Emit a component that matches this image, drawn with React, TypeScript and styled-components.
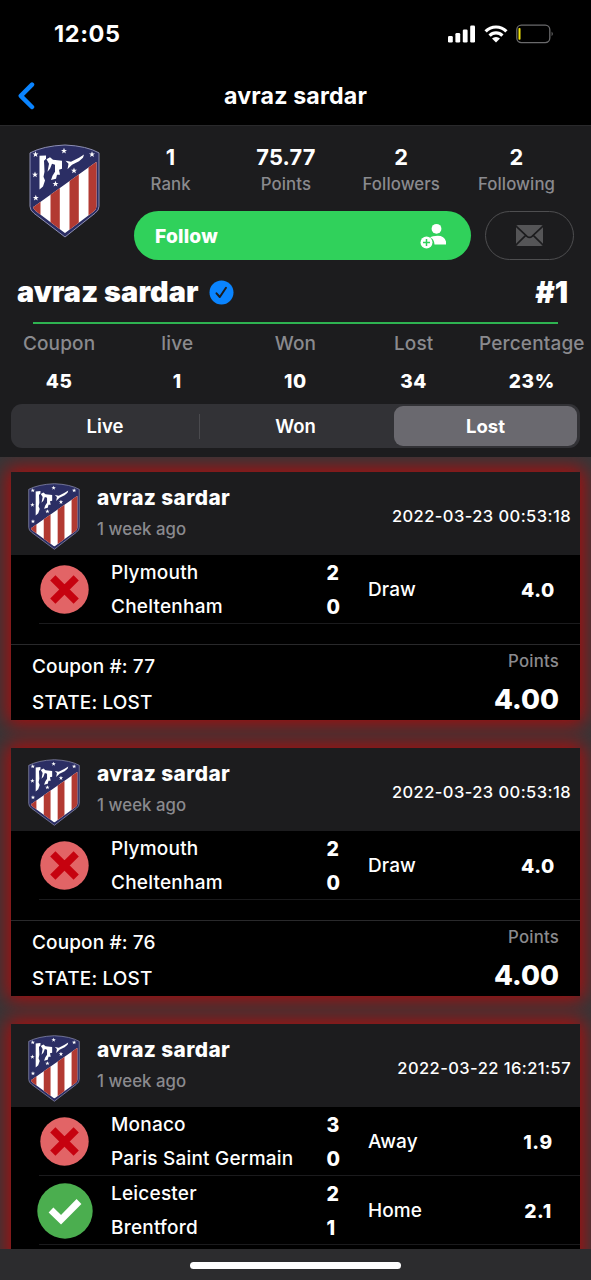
import React from "react";
import styled, { createGlobalStyle } from "styled-components";

const Global = createGlobalStyle`
  * { box-sizing: border-box; }
  body { margin: 0; background: #000; }
`;

const Screen = styled.div`
  width: 591px;
  height: 1280px;
  overflow: hidden;
  display: flex;
  flex-direction: column;
  background: #000;
  color: #fff;
  font-family: Inter, "Liberation Sans", sans-serif;
  white-space: nowrap;
`;

type TextProps = { $size: number; $weight?: number; $track?: number; $muted?: boolean; $line?: number };
const Text = styled.span<TextProps>`
  font-size: ${(p) => p.$size}px;
  font-weight: ${(p) => p.$weight ?? 500};
  letter-spacing: ${(p) => p.$track ?? 0}px;
  line-height: ${(p) => p.$line ?? 24}px;
  color: ${(p) => (p.$muted ? "#8a8a8e" : "#fff")};
`;

const StatusBar = styled.div`
  height: 67px;
  flex: none;
  display: flex;
  justify-content: space-between;
  align-items: center;
  padding: 1px 37px 0 54px;
`;
const StatusIcons = styled.div`
  display: flex;
  align-items: center;
  gap: 8px;
`;
const NavBar = styled.div`
  height: 59px;
  flex: none;
  display: grid;
  grid-template-columns: 60px 1fr 60px;
  align-items: center;
  justify-items: center;
  border-bottom: 1px solid #29292b;
`;
const Back = styled.svg`
  justify-self: start;
  margin-left: 17px;
`;

const Profile = styled.section`
  height: 331px;
  flex: none;
  background: #1c1c1e;
  display: flex;
  flex-direction: column;
`;
const ProfileTop = styled.div`
  display: flex;
  height: 136px;
  padding: 18px 17px 0 29px;
`;
const ProfileMain = styled.div`
  margin-left: 13px;
  flex: 1;
`;
const Stats = styled.div`
  display: grid;
  grid-template-columns: repeat(4, 115.3px);
  height: 67px;
`;
const Stat = styled.div`
  display: flex;
  flex-direction: column;
  align-items: center;
`;
const Actions = styled.div`
  display: flex;
  gap: 14px;
  padding-left: 21px;
`;
const FollowButton = styled.div`
  width: 337px;
  height: 49px;
  border-radius: 25px;
  background: #30d15b;
  display: flex;
  align-items: center;
  justify-content: space-between;
  padding: 0 24px 0 21px;
`;
const MessageButton = styled.div`
  width: 89px;
  height: 49px;
  border-radius: 25px;
  border: 1.5px solid #4e4e50;
  display: flex;
  align-items: center;
  justify-content: center;
`;
const NameRow = styled.div`
  display: flex;
  align-items: center;
  height: 60px;
  padding: 0 23px 0 17px;
`;
const Badge = styled.svg`
  margin: 0 auto 0 10px;
`;
const GreenLine = styled.div`
  height: 2px;
  margin: 0 33px;
  background: #2eb351;
`;
const Counters = styled.div`
  display: grid;
  grid-template-columns: repeat(5, 118.2px);
  height: 80px;
  padding-top: 8px;
`;
const Counter = styled(Stat)`
  gap: 14px;
`;
const Tabs = styled.div`
  display: grid;
  grid-template-columns: 187px 191px 1fr;
  height: 44px;
  margin: 0 11px;
  padding: 2px;
  border-radius: 11px;
  background: #323236;
`;
const Tab = styled.div<{ $active?: boolean; $divider?: boolean }>`
  display: flex;
  align-items: center;
  justify-content: center;
  padding-right: ${(p) => (p.$divider ? 3 : 0)}px;
  margin: ${(p) => (p.$active ? "0 1px 0 3px" : "0")};
  background: ${(p) =>
    p.$active ? "#6a696f" : p.$divider ? "linear-gradient(#4a4a4e, #4a4a4e) 100% 50% / 1px 25px no-repeat" : "transparent"};
  border-radius: ${(p) => (p.$divider ? 0 : 9)}px;
`;

const List = styled.main`
  height: 792px;
  flex: none;
  overflow: hidden;
  background: #363638;
  padding: 15px 11px 0;
  display: flex;
  flex-direction: column;
  gap: 28px;
`;
const Card = styled.article`
  flex: none;
  background: #000;
  box-shadow: 0 0 18px 4px rgba(205, 0, 0, 0.78);
`;
const CardHead = styled.header`
  height: 82.6px;
  background: #1c1c1e;
  display: flex;
  align-items: center;
  padding: 6px 9px 0 17px;
`;
const Author = styled.div`
  display: flex;
  flex-direction: column;
  gap: 7px;
  margin: 0 auto 5px 17px;
`;
const Match = styled.div`
  height: 69px;
  display: grid;
  grid-template-columns: 72px 215.5px 41.5px 127px 1fr;
  align-items: center;
  margin-left: 28px;
  padding-top: 2px;
  border-bottom: 1px solid #1b1b1d;
`;
const Mark = styled.div`
  width: 51px;
  display: flex;
  justify-content: center;
`;
const Pair = styled.div`
  display: flex;
  flex-direction: column;
  gap: 10.5px;
  padding-top: 1px;
`;
const Odds = styled.div`
  width: 86px;
  text-align: center;
`;
const CardFoot = styled.footer`
  margin-top: 20px;
  height: 76.4px;
  border-top: 1px solid #29292b;
  display: flex;
  justify-content: space-between;
  padding: 0 21px;
`;
const FootInfo = styled.div`
  display: flex;
  flex-direction: column;
  gap: 12px;
  padding-top: 10.8px;
`;
const FootPoints = styled.div`
  display: flex;
  flex-direction: column;
  align-items: flex-end;
  gap: 10px;
  padding-top: 4px;
`;
const HomeBar = styled.div`
  height: 31px;
  flex: none;
  background: #2c2c2e;
  display: flex;
  justify-content: center;
  padding-top: 13px;
`;
const HomeIndicator = styled.div`
  width: 211px;
  height: 7px;
  border-radius: 4px;
  background: #fff;
`;

const starPoints = "0,-3.2 .8,-1 3,-1 1.2,.4 1.9,2.6 0,1.3 -1.9,2.6 -1.2,.4 -3,-1 -.8,-1";
const stars = [[6.5, 10.5], [35, 7], [63, 10.5], [6, 31], [45, 27], [26.5, 40.3], [6.8, 54.5]];

function Crest({ width, height }: { width: number; height: number }) {
  const shape = "M36 1 Q58 2 70 9 L70 63 Q70 67 66 70 L36 94 L5 70 Q1 67 1 63 L1 9 Q14 2 36 1Z";
  return (
    <svg width={width} height={height} viewBox="0 0 71 95" preserveAspectRatio="none" style={{ flex: "none" }}>
      <defs>
        <clipPath id="crest-inner"><path d="M4 64 L67.5 18 V63 Q67.5 66 65 68 L36 90 L7 68 Q4 66 4 63Z" /></clipPath>
      </defs>
      <path d={shape} fill="#2b2e64" stroke="#8e90b4" strokeWidth="1" />
      <g clipPath="url(#crest-inner)">
        <path fill="#fff" d="M0 0h71v95H0z" />
        <path fill="#b23a32" d="M3 0h8.5v95H3zM21.5 0h9.3v95h-9.3zM40.5 0h9.3v95h-9.3zM59.5 0h9v95h-9z" />
      </g>
      <path
        fill="#fff"
        d="M10.5 12 L17 11.5 L17 15 L15 17 L15.5 28 L14.5 33 L16 37 L14 43 L10.5 46Z M17.5 15.5 L21 13.5 L24 16 L33 17 L33 25 L30 26 L31 31 L28 31 L27 35 L22 36.5 L23.5 32 L26 28 L26 21 L23 20 L21 25 L18.5 28 L20 20Z M36.5 17 L42 18 L50 14 L55 10.5 L54 14 L50 17.5 L43 21 L38.5 25.5 L39.5 20Z"
      />
      {stars.map(([x, y]) => <polygon key={`${x}-${y}`} points={starPoints} transform={`translate(${x} ${y})`} fill="#fff" />)}
    </svg>
  );
}

function LostMark() {
  return (
    <svg width="49" height="49" viewBox="0 0 49 49">
      <circle cx="24.5" cy="24.5" r="24.2" fill="#e26466" />
      <path d="M12.8 12.8 36.2 36.2M36.2 12.8 12.8 36.2" stroke="#c6020f" strokeWidth="7.4" />
    </svg>
  );
}
function WonMark() {
  return (
    <svg width="56" height="56" viewBox="0 0 56 56" style={{ flex: "none" }}>
      <circle cx="28" cy="28" r="27.7" fill="#4bae4f" />
      <path d="M14 27 24 36.8 42 18.5" fill="none" stroke="#fff" strokeWidth="6.8" />
    </svg>
  );
}

type Game = { home: string; away: string; hs: number; as: number; pick: string; odds: string; won?: boolean };
type Coupon = { id: number; date: string; games: Game[] };
const plymouth: Game = { home: "Plymouth", away: "Cheltenham", hs: 2, as: 0, pick: "Draw", odds: "4.0" };
const coupons: Coupon[] = [
  { id: 77, date: "2022-03-23 00:53:18", games: [plymouth] },
  { id: 76, date: "2022-03-23 00:53:18", games: [plymouth] },
  {
    id: 75, date: "2022-03-22 16:21:57", games: [
      { home: "Monaco", away: "Paris Saint Germain", hs: 3, as: 0, pick: "Away", odds: "1.9" },
      { home: "Leicester", away: "Brentford", hs: 2, as: 1, pick: "Home", odds: "2.1", won: true },
    ],
  },
];

function CouponCard({ coupon, footer }: { coupon: Coupon; footer: boolean }) {
  return (
    <Card>
      <CardHead>
        <Crest width={52} height={67} />
        <Author>
          <Text $size={20.8} $weight={850} $track={0.4}>avraz sardar</Text>
          <Text $size={16.8} $muted $track={0.05}>1 week ago</Text>
        </Author>
        <Text $size={16.5} $track={0.43}>{coupon.date}</Text>
      </CardHead>
      {coupon.games.map((g) => (
        <Match key={g.home}>
          <Mark>{g.won ? <WonMark /> : <LostMark />}</Mark>
          <Pair>
            <Text $size={19} $track={0.22}>{g.home}</Text>
            <Text $size={19} $track={0.22}>{g.away}</Text>
          </Pair>
          <Pair>
            <Text $size={19.5} $weight={800}>{g.hs}</Text>
            <Text $size={19.5} $weight={800}>{g.as}</Text>
          </Pair>
          <Text $size={19} $track={0.1} $line={25}>{g.pick}</Text>
          <Odds><Text $size={19.2} $weight={800} $track={0.6}>{g.odds}</Text></Odds>
        </Match>
      ))}
      {footer ? (
        <CardFoot>
          <FootInfo>
            <Text $size={19} $track={0.13}>Coupon #: {coupon.id}</Text>
            <Text $size={19} $track={0.13}>STATE: LOST</Text>
          </FootInfo>
          <FootPoints>
            <Text $size={16.8} $muted $track={0.2}>Points</Text>
            <Text $size={27.5} $weight={850} $line={32}>4.00</Text>
          </FootPoints>
        </CardFoot>
      ) : <CardFoot />}
    </Card>
  );
}

const profileStats = [["1", "Rank"], ["75.77", "Points"], ["2", "Followers"], ["2", "Following"]];
const counters = [["Coupon", "45"], ["live", "1"], ["Won", "10"], ["Lost", "34"], ["Percentage", "23%"]];

export default function App() {
  return (
    <Screen>
      <Global />
      <StatusBar>
        <Text $size={23.5} $weight={700} $track={0.6}>12:05</Text>
        <StatusIcons>
          <svg width="28" height="18" viewBox="0 0 28 18" fill="#fff">
            <rect x="0" y="11" width="4.8" height="6.5" rx="1.3" />
            <rect x="7.4" y="8" width="4.8" height="9.5" rx="1.3" />
            <rect x="14.8" y="4.5" width="4.8" height="13" rx="1.3" />
            <rect x="22.2" y="0.5" width="4.8" height="17" rx="1.3" />
          </svg>
          <svg width="24" height="18" viewBox="0 0 24 18" fill="none" stroke="#fff" strokeWidth="3.2">
            <path d="M1.6 6.4A14.5 14.5 0 0 1 22.4 6.4M5.6 10.6A9 9 0 0 1 18.4 10.6" />
            <path d="M12 17.4 8 13.6A5.6 5.6 0 0 1 16 13.6Z" fill="#fff" stroke="none" />
          </svg>
          <svg width="38" height="20" viewBox="0 0 38 20">
            <rect x="0.8" y="1.2" width="33" height="17.4" rx="4.5" fill="none" stroke="#6a6a6c" strokeWidth="1.3" />
            <rect x="2.5" y="4" width="2" height="11.8" rx="0.8" fill="#f3e60b" />
            <path d="M35.6 7.5Q38 9.9 35.6 12.3Z" fill="#6a6a6c" />
          </svg>
        </StatusIcons>
      </StatusBar>
      <NavBar>
        <Back width="19" height="28" viewBox="0 0 19 28" fill="none" stroke="#0a84ff" strokeWidth="4.5" strokeLinecap="round" strokeLinejoin="round">
          <path d="M15 2.6 3.8 13.8 15 25" />
        </Back>
        <Text $size={23.2} $weight={750} $track={0.15}>avraz sardar</Text>
      </NavBar>
      <Profile>
        <ProfileTop>
          <Crest width={71} height={94} />
          <ProfileMain>
            <Stats>
              {profileStats.map(([value, label]) => (
                <Stat key={label}>
                  <Text $size={21.8} $weight={750} $track={0.2} $line={27}>{value}</Text>
                  <Text $size={16.8} $muted $track={0.08} $line={27}>{label}</Text>
                </Stat>
              ))}
            </Stats>
            <Actions>
              <FollowButton>
                <Text $size={19.2} $weight={800} $track={0.2}>Follow</Text>
                <svg width="27" height="26" viewBox="0 0 27 26" fill="#fff">
                  <circle cx="16.5" cy="5.8" r="4.9" />
                  <path d="M13 13.2Q24 11 26 18.5V21.5H14.5Q14 15.5 10 14.2Z" />
                  <circle cx="6.5" cy="19.5" r="6" />
                  <path d="M6.5 16v7M3 19.5h7" stroke="#30d15b" strokeWidth="1.5" />
                </svg>
              </FollowButton>
              <MessageButton>
                <svg width="27" height="21" viewBox="0 0 27 21">
                  <rect width="27" height="21" rx="2" fill="#555557" />
                  <path d="M0 1 11 11.3Q13.5 13.5 16 11.3L27 1M0 20 9.5 10.6M27 20 17.5 10.6" stroke="#1c1c1e" strokeWidth="1.7" fill="none" />
                </svg>
              </MessageButton>
            </Actions>
          </ProfileMain>
        </ProfileTop>
        <NameRow>
          <Text $size={28.8} $weight={900} $track={0.1} $line={34}>avraz sardar</Text>
          <Badge width="25" height="25" viewBox="0 0 25 25">
            <circle cx="12.5" cy="12.5" r="12" fill="#0a84ff" />
            <path d="M7.5 13.3 10.8 17 17 7.8" fill="none" stroke="#1c1c1e" strokeWidth="2" strokeLinecap="round" strokeLinejoin="round" />
          </Badge>
          <Text $size={29.5} $weight={900} $line={34}>#1</Text>
        </NameRow>
        <GreenLine />
        <Counters>
          {counters.map(([label, value]) => (
            <Counter key={label}>
              <Text $size={19} $muted $track={0.15}>{label}</Text>
              <Text $size={19} $weight={800} $track={0.6}>{value}</Text>
            </Counter>
          ))}
        </Counters>
        <Tabs>
          <Tab $divider><Text $size={18.5} $weight={600}>Live</Text></Tab>
          <Tab><Text $size={18.5} $weight={600}>Won</Text></Tab>
          <Tab $active><Text $size={18.5} $weight={700}>Lost</Text></Tab>
        </Tabs>
      </Profile>
      <List>
        {coupons.map((c, i) => <CouponCard key={c.id} coupon={c} footer={i < 2} />)}
      </List>
      <HomeBar><HomeIndicator /></HomeBar>
    </Screen>
  );
}
